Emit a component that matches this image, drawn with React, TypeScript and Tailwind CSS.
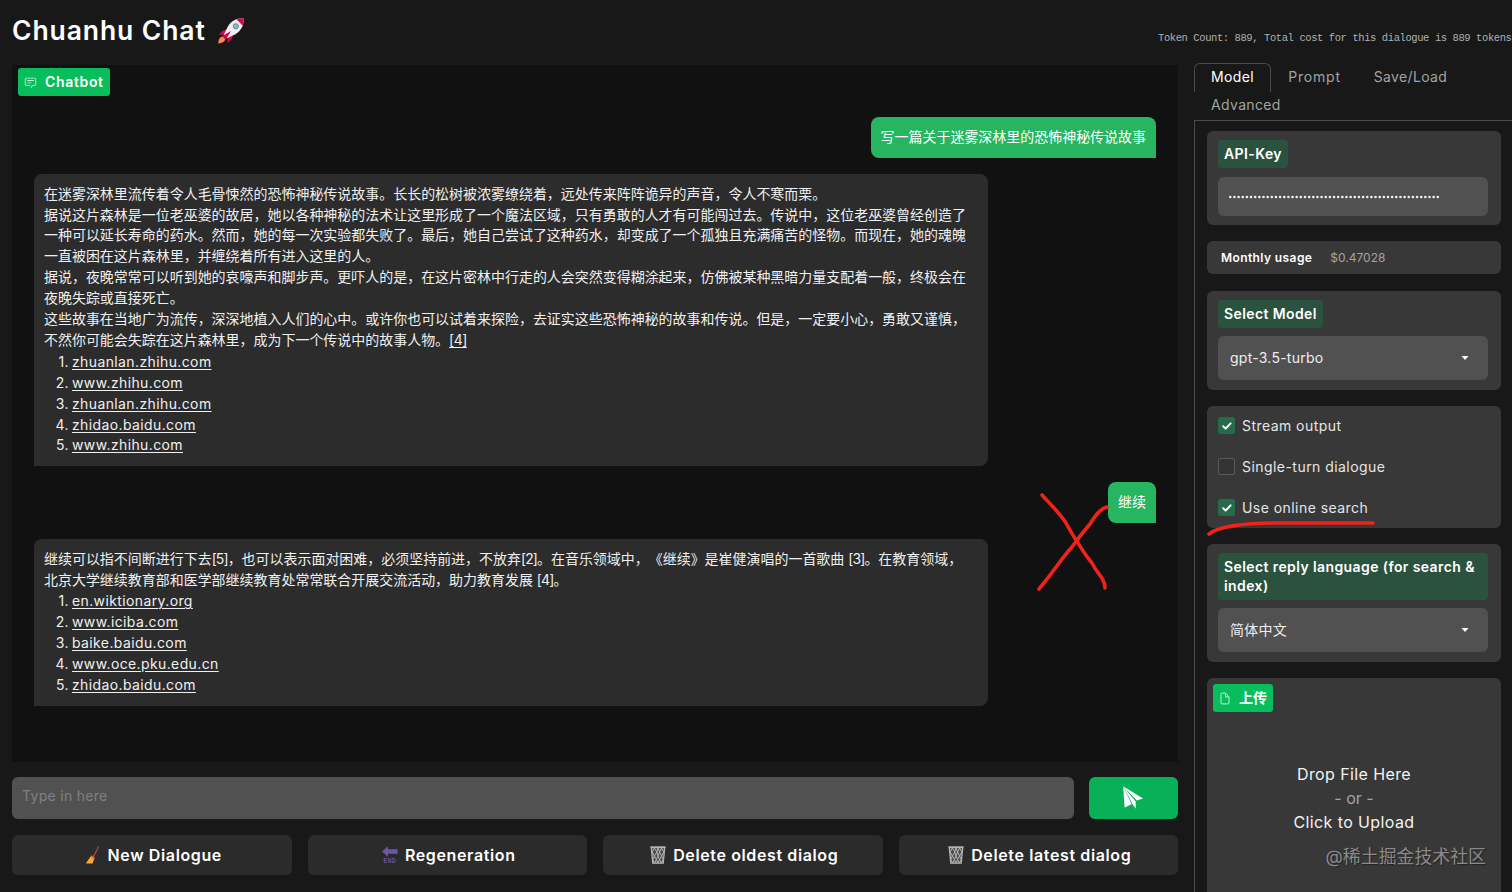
import { useState } from 'react';
import type { ReactNode } from 'react';

interface Message {
  role: 'user' | 'bot';
  lines: ReactNode[];
  links?: string[];
}

function Ref({ n }: { n: number }) {
  return <span className="tracking-[-0.9px]">[{n}]</span>;
}

const messages: Message[] = [
  {
    role: 'user',
    lines: ['写一篇关于迷雾深林里的恐怖神秘传说故事'],
  },
  {
    role: 'bot',
    lines: [
      '在迷雾深林里流传着令人毛骨悚然的恐怖神秘传说故事。长长的松树被浓雾缭绕着，远处传来阵阵诡异的声音，令人不寒而栗。',
      '据说这片森林是一位老巫婆的故居，她以各种神秘的法术让这里形成了一个魔法区域，只有勇敢的人才有可能闯过去。传说中，这位老巫婆曾经创造了',
      '一种可以延长寿命的药水。然而，她的每一次实验都失败了。最后，她自己尝试了这种药水，却变成了一个孤独且充满痛苦的怪物。而现在，她的魂魄',
      '一直被困在这片森林里，并缠绕着所有进入这里的人。',
      '据说，夜晚常常可以听到她的哀嚎声和脚步声。更吓人的是，在这片密林中行走的人会突然变得糊涂起来，仿佛被某种黑暗力量支配着一般，终极会在',
      '夜晚失踪或直接死亡。',
      '这些故事在当地广为流传，深深地植入人们的心中。或许你也可以试着来探险，去证实这些恐怖神秘的故事和传说。但是，一定要小心，勇敢又谨慎，',
      <>
        不然你可能会失踪在这片森林里，成为下一个传说中的故事人物。
        <u className="tracking-[-0.5px] underline-offset-2">[4]</u>
      </>,
    ],
    links: ['zhuanlan.zhihu.com', 'www.zhihu.com', 'zhuanlan.zhihu.com', 'zhidao.baidu.com', 'www.zhihu.com'],
  },
  {
    role: 'user',
    lines: ['继续'],
  },
  {
    role: 'bot',
    lines: [
      <>
        继续可以指不间断进行下去<Ref n={5} />，也可以表示面对困难，必须坚持前进，不放弃<Ref n={2} />。在音乐领域中，《继续》是崔健演唱的一首歌曲 <Ref n={3} />。在教育领域，
      </>,
      <>
        北京大学继续教育部和医学部继续教育处常常联合开展交流活动，助力教育发展 <Ref n={4} />。
      </>,
    ],
    links: ['en.wiktionary.org', 'www.iciba.com', 'baike.baidu.com', 'www.oce.pku.edu.cn', 'zhidao.baidu.com'],
  },
];

function RocketIcon() {
  return (
    <svg width="28" height="28" viewBox="0 0 28 28">
      <path d="M6 19.5C2.8 19.6 1.6 22 1.2 26.4c4.4-.2 6.8-1.6 7-4.6z" fill="#ff8257" />
      <path d="M9.5 12.5C6.2 12.6 3.8 14.4 2.2 18l6-.6z" fill="#ca0b4a" />
      <path d="M15.5 18.5c0 3.3-1.8 5.7-5.2 7.3l.4-6z" fill="#ca0b4a" />
      <path d="M26.6 1.4c-7-.4-12.2 2.4-16 8.6L6.4 18.6l3 3 8.6-4.2c6.2-3.8 9-9 8.6-16z" fill="#f4eef4" />
      <path d="M26.6 1.4c-2.6-.2-4.9.1-7 1l6 6c.9-2.1 1.2-4.4 1-7z" fill="#ca0b4a" />
      <path d="M14 13.9 5.2 19l3.6 3.7z" fill="#ca0b4a" />
      <circle cx="18.8" cy="9.3" r="2.6" fill="#8fb8c8" stroke="#5a8aa0" strokeWidth="1" />
    </svg>
  );
}

function ChatIcon() {
  return (
    <svg width="13" height="13" viewBox="0 0 32 32" fill="#c9f5da">
      <path d="M17.74 30 16 29l4-7h6a2 2 0 0 0 2-2V8a2 2 0 0 0-2-2H6a2 2 0 0 0-2 2v12a2 2 0 0 0 2 2h9v2H6a4 4 0 0 1-4-4V8a4 4 0 0 1 4-4h20a4 4 0 0 1 4 4v12a4 4 0 0 1-4 4h-4.84Z" />
      <path d="M8 10h16v2H8zm0 6h10v2H8z" />
    </svg>
  );
}

function FileIcon() {
  return (
    <svg width="12" height="13" viewBox="0 0 24 24" preserveAspectRatio="none" fill="none" stroke="#c9f5da" strokeWidth="1.8" strokeLinejoin="round">
      <path d="M13 2H6a2 2 0 0 0-2 2v16a2 2 0 0 0 2 2h12a2 2 0 0 0 2-2V9z" />
      <path d="M13 2v7h7" />
    </svg>
  );
}

function SendIcon() {
  return (
    <svg width="20" height="24" viewBox="0 0 20 24" fill="#fff" className="-ml-0.5">
      <path d="M.2.2 20 12.4l-6.2 2z" />
      <path d="M.2.2 12.6 15.6l.2 7.2-3.2-4.6z" />
      <path d="M.2.2 8.6 18.2 1.6 21.4z" />
    </svg>
  );
}

function BroomIcon() {
  return (
    <svg width="16" height="18" viewBox="0 0 16 18">
      <path d="M13.4 1 8.6 10.4" stroke="#a5444a" strokeWidth="1.3" strokeLinecap="round" />
      <path d="M5.8 10.2 9.2 12.8 7.6 17.4H1C1.8 15.4 4 13.6 5.8 10.2z" fill="#f9a834" />
      <path d="m6.2 10 3.4 2.6" stroke="#e0702a" strokeWidth="1.6" />
    </svg>
  );
}

function EndIcon() {
  return (
    <svg width="16" height="18" viewBox="0 0 16 18" fill="#6a57a3" overflow="visible">
      <path d="M0 5.4 6 .2v3h9.6v4.5H6v3z" />
      <text x="1.6" y="17.2" fontSize="7.8" fontWeight="700" fontFamily="Liberation Sans, sans-serif" textLength="12.4" lengthAdjust="spacingAndGlyphs">
        END
      </text>
    </svg>
  );
}

function TrashIcon() {
  return (
    <svg width="16" height="18" viewBox="0 0 16 18" fill="none">
      <path d="M1 1h14l-1.6 16.4H2.6z" fill="#4a4a4a" />
      <path d="M.4 1.2h15.2" stroke="#b5b5b5" strokeWidth="1.8" />
      <path d="M1.3 1.6 2.8 17.2h10.4l1.5-15.6" stroke="#b5b5b5" strokeWidth="1.3" />
      <path d="M4.4 2 2.2 6l2.2 4-1.6 3.6L4.6 17M4.4 2l2.4 4-2.4 4 2 3.6L4.6 17M8 2 6.8 6 8 10l-1.6 3.6L8 17M8 2l1.6 4L8 10l1.6 3.6L8 17M11.6 2 9.6 6l2 4-2 3.6 1.8 3.4M11.6 2l2.2 4-2.2 4 1.6 3.6-1.8 3.4" stroke="#b5b5b5" strokeWidth="1" />
    </svg>
  );
}

const actions = [
  { label: 'New Dialogue', icon: <BroomIcon /> },
  { label: 'Regeneration', icon: <EndIcon /> },
  { label: 'Delete oldest dialog', icon: <TrashIcon /> },
  { label: 'Delete latest dialog', icon: <TrashIcon /> },
];

function Bubble({ message }: { message: Message }) {
  if (message.role === 'user') {
    return (
      <div className="self-end rounded-lg rounded-br-none bg-[#27b561] px-[10px] py-[10px] text-white">
        {message.lines[0]}
      </div>
    );
  }
  return (
    <div className="w-[954px] self-start rounded-lg rounded-bl-none bg-[#2c2c2c] px-[10px] pt-[9.6px] pb-[10px] text-[#f0f0f0]">
      {message.lines.map((line, i) => (
        <p key={i} className="whitespace-nowrap">{line}</p>
      ))}
      <ol className="pt-[0.5px] tracking-[0.4px]">
        {message.links?.map((link, i) => (
          <li key={i} className="flex gap-[3px]">
            <span className="w-[25px] text-right">{i + 1}.</span>
            <a className="underline underline-offset-2">{link}</a>
          </li>
        ))}
      </ol>
    </div>
  );
}

function Label({ children }: { children: ReactNode }) {
  return (
    <div className="w-fit rounded bg-[#2b523e] px-1.5 pt-1 pb-[5px] text-sm leading-[19px] font-semibold tracking-[0.4px] text-white">
      {children}
    </div>
  );
}

function Select({ value }: { value: string }) {
  return (
    <div className="flex h-11 items-center justify-between rounded-md bg-[#515151] pr-[19px] pl-3 text-sm tracking-[0.25px] text-[#eee]">
      {value}
      <svg width="8" height="4" viewBox="0 0 8 4" fill="#fff">
        <path d="M.5 0h7L4 4z" />
      </svg>
    </div>
  );
}

function Checkbox({ label, checked, onChange }: { label: string; checked: boolean; onChange: () => void }) {
  return (
    <button onClick={onChange} className="flex h-[17px] items-center gap-[7px] text-sm tracking-[0.45px] text-[#e6e6e6]">
      <span
        className={`flex size-[17px] items-center justify-center rounded-[2px] border ${
          checked ? 'border-[#256b4c] bg-[#256b4c]' : 'border-[#5a5a5a] bg-[#333]'
        }`}
      >
        {checked && (
          <svg width="10" height="8" viewBox="0 0 10 8" fill="none" stroke="#fff" strokeWidth="2" strokeLinecap="round" strokeLinejoin="round">
            <path d="M1.2 4.2 3.6 6.6 8.6 1.4" />
          </svg>
        )}
      </span>
      {label}
    </button>
  );
}

export default function App() {
  const [options, setOptions] = useState([
    { label: 'Stream output', checked: true },
    { label: 'Single-turn dialogue', checked: false },
    { label: 'Use online search', checked: true },
  ]);

  const toggle = (idx: number) =>
    setOptions((prev) => prev.map((o, i) => (i === idx ? { ...o, checked: !o.checked } : o)));

  return (
    <div className="relative flex h-[892px] w-[1512px] flex-col overflow-hidden bg-[#181818] pl-3 font-[Inter,'Noto_Sans_CJK_SC',sans-serif] [text-spacing-trim:space-all]">
      <header className="flex h-[63px] shrink-0 justify-between">
        <h1 className="flex h-[61px] items-center gap-[11px] text-[26.5px] font-semibold tracking-[0.9px] text-white">
          Chuanhu Chat
          <RocketIcon />
        </h1>
        <p className="w-[354px] pt-[30px] font-['Liberation_Mono',monospace] text-[10.5px] leading-4 tracking-[-0.41px] whitespace-nowrap text-[#b0b0b0]">
          Token Count: 889, Total cost for this dialogue is 889 tokens
        </p>
      </header>

      <div className="flex min-h-0 flex-1 gap-4">
        <main className="flex w-[1166px] shrink-0 flex-col pt-[2px]">
          <section className="h-[697px] bg-[#111] pt-[3px] pr-[22px] pl-[22px]">
            <div className="-ml-4 flex h-7 w-[92px] items-center gap-[8px] rounded-[3px] bg-[#07bd5c] pl-1.5 text-sm font-semibold tracking-[0.65px] text-white">
              <ChatIcon />
              Chatbot
            </div>
            <div className="flex flex-col gap-4 pt-[21px] text-[13.97px] leading-[20.95px]">
              {messages.map((message, i) => (
                <Bubble key={i} message={message} />
              ))}
            </div>
          </section>

          <div className="mt-[15px] flex h-[42px] gap-[15px]">
            <input
              placeholder="Type in here"
              className="flex-1 rounded-md bg-[#515151] px-2.5 pb-1 text-sm tracking-[0.3px] text-white outline-none placeholder:text-[#808080]"
            />
            <button className="flex w-[89px] items-center justify-center rounded-md bg-[#08b057]">
              <SendIcon />
            </button>
          </div>

          <div className="mt-4 grid h-10 grid-cols-4 gap-4">
            {actions.map((action) => (
              <button key={action.label} className="flex items-center justify-center gap-[7px] rounded-md bg-[#2b2b2b] pl-[3px] text-base font-semibold tracking-[0.62px] text-white">
                {action.icon}
                {action.label}
              </button>
            ))}
          </div>
        </main>

        <aside className="flex flex-1 flex-col">
          <nav className="flex h-[58px] shrink-0 flex-wrap content-start border-b border-[#4a4a4a] text-sm leading-[26px] tracking-[0.35px] text-[#a3a3a3]">
            <button className="flex h-[29px] w-[77px] justify-center rounded-t-md border border-b-0 border-[#4a4a4a] text-white">Model</button>
            <button className="flex h-[29px] w-[87px] justify-center pt-px tracking-[0.8px]">Prompt</button>
            <button className="flex h-[29px] w-[105px] justify-center pt-px">Save/Load</button>
            <button className="flex h-7 pl-[17px]">Advanced</button>
          </nav>

          <div className="flex flex-1 flex-col gap-[16.3px] overflow-hidden border-l border-[#4a4a4a] pt-[10px] pr-[11px] pl-3">
            <section className="h-[94px] shrink-0 rounded-md bg-[#383838] px-[11px] pt-[9px]">
              <Label>API-Key</Label>
              <div className="mt-[9px] flex h-[39px] w-[270px] items-center rounded-md bg-[#515151] pl-[11px]">
                <svg width="211" height="4" stroke="#f0f0f0" strokeWidth="2.6" strokeLinecap="round">
                  <path d="M1.3 2H210" strokeDasharray="0 4.15" />
                </svg>
              </div>
            </section>

            <section className="flex h-[33px] shrink-0 items-center gap-[18px] rounded-md bg-[#383838] pl-[14px] text-xs">
              <b className="font-semibold tracking-[0.4px] text-white">Monthly usage</b>
              <span className="text-[#a3a3a3]">$0.47028</span>
            </section>

            <section className="h-[99px] shrink-0 rounded-md bg-[#383838] pt-[9px] pr-[13px] pl-[11px]">
              <Label>Select Model</Label>
              <div className="mt-2">
                <Select value="gpt-3.5-turbo" />
              </div>
            </section>

            <section className="flex h-[122px] shrink-0 flex-col gap-6 rounded-md bg-[#383838] pt-[11.5px] pl-[11px]">
              {options.map((option, i) => (
                <Checkbox key={option.label} {...option} onChange={() => toggle(i)} />
              ))}
            </section>

            <section className="h-[118px] shrink-0 rounded-md bg-[#383838] pt-[9px] pr-[13px] pl-[11px]">
              <Label>Select reply language (for search &amp; index)</Label>
              <div className="mt-2">
                <Select value="简体中文" />
              </div>
            </section>

            <section className="h-[230px] shrink-0 rounded-md bg-[#383838] pt-1.5 pl-1.5">
              <div className="flex h-7 w-[60px] items-center gap-2 rounded-[3px] bg-[#07bd5c] pl-1.5 text-sm font-bold text-white">
                <FileIcon />
                上传
              </div>
              <div className="pt-[50px] pr-1.5 text-center text-base leading-6 tracking-[0.4px] text-[#f3f3f3]">
                <p>Drop File Here</p>
                <p className="tracking-[0px] text-[#a3a3a3]">- or -</p>
                <p>Click to Upload</p>
              </div>
            </section>
          </div>
        </aside>
      </div>

      {/* hand-drawn marks */}
      <svg className="pointer-events-none absolute inset-0" width="1512" height="892" fill="none" stroke="#f0231a" strokeWidth="3.6" strokeLinecap="round" strokeLinejoin="round">
        <path d="M1042 495c6 7 17 17 24 28 5 9 9 16 12 20 4 6 7 12 14 20 5 10 8 11 11 17 2 4 2 5 2 8" />
        <path d="M1107 507c-6 1-11 7-17 17-6 7-11 13-18 23-12 13-13 18-33 42" />
        <path d="M1209 534c8-7 34-11 64-11h100" />
      </svg>
      <span className="absolute right-[26px] bottom-[23px] text-[17.9px] leading-6 text-[#8a8a8a] [text-shadow:1px_1px_1px_#222]">@稀土掘金技术社区</span>
    </div>
  );
}
